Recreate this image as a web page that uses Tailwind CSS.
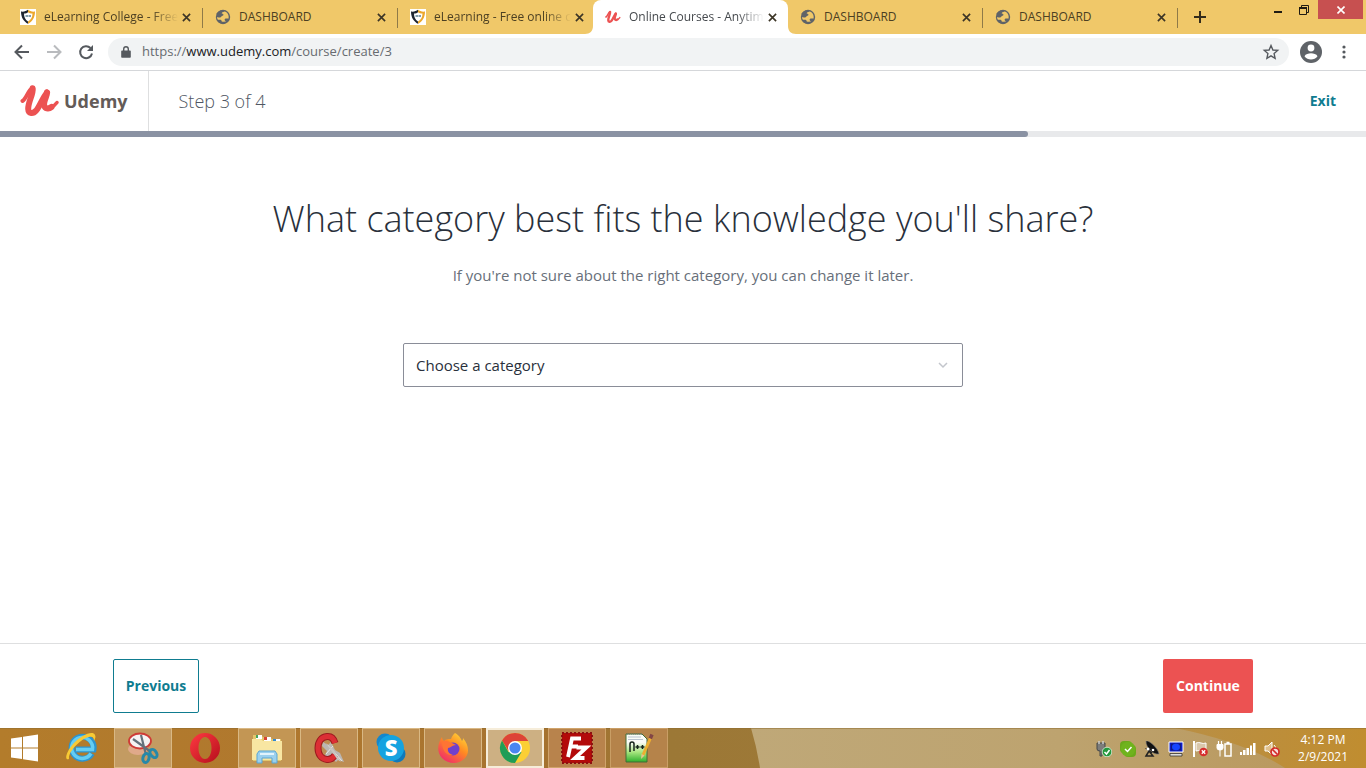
<!DOCTYPE html>
<html lang="en">

<head>
    <meta charset="UTF-8">
    <meta name="viewport" content="width=device-width, initial-scale=1.0">
    <script src="https://cdn.jsdelivr.net/npm/@tailwindcss/browser@4"></script>
    <title>Online Courses - Anytime, Anywhere | Udemy</title>
</head>

<body class="h-screen flex flex-col overflow-hidden bg-white font-['Open_Sans','Noto_Sans',sans-serif]">

    <!-- shared symbols -->
    <svg class="hidden">
        <symbol id="shield" viewBox="0 0 16 16">
            <rect width="16" height="16" fill="#fff" />
            <path d="M1 2.500C4 3 6 2 8 .8v14C4 12.500 1 9 1 2.500z" fill="#1d2430" />
            <path d="M8 .8C10 2 12 3 15 2.500 15 9 12 12.500 8 15z" fill="#eca72c" />
            <path d="M4 4.500C6 4.500 7 4 8 3.200c1 .8 2.500 1.300 4.500 1.300 0 4-1.500 6-4.500 8-3-2-4-4.500-4-8z" fill="#fff" />
            <path d="M5.500 7H8M8.500 7H11" stroke="#5c7f93" stroke-width="1.500" />
        </symbol>
        <symbol id="globe" viewBox="0 0 16 16">
            <circle cx="8" cy="8" r="7.200" fill="#5f6368" />
            <path d="M9.500 2.500C8 3 6.500 3.500 6.800 4.500c.3.800 1.400.3 1.700 1.100.2.900-.8 1-1.600 1.500-.6.500-.8 1.200-1.800 1.300-1 0-2-.4-3.200-.2.100.9.500 1.800 1 2.500 1 .2 2.400-.4 3.200.3.700.7.300 1.700 1 2.300 1 .3 2.500 0 3.500-.6 0-.8-1-1.200-1-2s.8-1.200 1.800-1.200h2.200c.4-2.200-.3-4.800-2.200-6.200-.6-.4-1.300-.8-1.900-.8z" fill="#f0c869" />
            <path d="M2 5.500C3 4 4 3 6 2.500M4 12.500C6 14 8 14 10 13.500" fill="none" stroke="#5f6368" stroke-width="2" />
        </symbol>
        <symbol id="close" viewBox="0 0 10 10">
            <path d="M1 1l8 8M9 1L1 9" stroke="#3c3526" stroke-width="1.800" />
        </symbol>
        <symbol id="udemy" viewBox="0 0 40 34">
            <g fill="none" stroke="#ec5252" stroke-linecap="round" stroke-linejoin="round">
                <path d="M2.500 17C6.500 14.500 8 6 12.500 4" stroke-width="4" />
                <path d="M12.700 4.300C13.500 10 8 18 8.200 25c.2 5 5 5 8 1.500 4-5 6-12 10.800-18" stroke-width="6" />
                <path d="M27 8.500C27.500 12 22.500 18 24.500 22.500c2 3 5 2 7 .5" stroke-width="6" />
                <path d="M31 23.500c3-1.500 4.500-3 6-5" stroke-width="3.500" />
            </g>
        </symbol>
    </svg>

    <!-- tab strip -->
    <div class="h-[34px] shrink-0 flex bg-[#f0c869] pl-2 text-xs text-[#4b3f22]">
        <div class="flex flex-1 min-w-0">
            <div class="relative w-full max-w-[195px] flex items-center gap-1 px-3">
                <svg class="w-4 h-4 shrink-0"><use href="#shield" /></svg>
                <span class="flex-1 ml-1 whitespace-nowrap [mask-image:linear-gradient(to_right,black_80%,transparent)]">eLearning College - Free</span>
                <button aria-label="Close tab"><svg class="block w-[9px] h-[9px]"><use href="#close" /></svg></button>
                <i class="absolute right-0 top-2 w-px h-5 bg-[#8f7a48]"></i>
            </div>
            <div class="relative w-full max-w-[195px] flex items-center gap-1 px-3">
                <svg class="w-4 h-4 shrink-0"><use href="#globe" /></svg>
                <span class="flex-1 ml-1 whitespace-nowrap">DASHBOARD</span>
                <button aria-label="Close tab"><svg class="block w-[9px] h-[9px]"><use href="#close" /></svg></button>
                <i class="absolute right-0 top-2 w-px h-5 bg-[#8f7a48]"></i>
            </div>
            <div class="relative w-full max-w-[195px] flex items-center gap-1 px-3">
                <svg class="w-4 h-4 shrink-0"><use href="#shield" /></svg>
                <span class="flex-1 ml-1 whitespace-nowrap [mask-image:linear-gradient(to_right,black_80%,transparent)]">eLearning - Free online c</span>
                <button aria-label="Close tab"><svg class="block w-[9px] h-[9px]"><use href="#close" /></svg></button>
            </div>
            <div class="relative w-full max-w-[195px] flex items-center gap-1 px-3 bg-white rounded-t-lg text-[#45494d]">
                <svg class="absolute -left-2 bottom-0 w-2 h-2" viewBox="0 0 8 8"><path d="M8 0v8H0c5 0 8-3 8-8z" fill="#fff" /></svg>
                <svg class="absolute -right-2 bottom-0 w-2 h-2" viewBox="0 0 8 8"><path d="M0 0v8h8C3 8 0 5 0 0z" fill="#fff" /></svg>
                <svg class="w-4 h-4 shrink-0"><use href="#udemy" /></svg>
                <span class="flex-1 ml-1 whitespace-nowrap [mask-image:linear-gradient(to_right,black_80%,transparent)]">Online Courses - Anytim</span>
                <button aria-label="Close tab"><svg class="block w-[9px] h-[9px]"><use href="#close" /></svg></button>
            </div>
            <div class="relative w-full max-w-[195px] flex items-center gap-1 px-3">
                <svg class="w-4 h-4 shrink-0"><use href="#globe" /></svg>
                <span class="flex-1 ml-1 whitespace-nowrap">DASHBOARD</span>
                <button aria-label="Close tab"><svg class="block w-[9px] h-[9px]"><use href="#close" /></svg></button>
                <i class="absolute right-0 top-2 w-px h-5 bg-[#8f7a48]"></i>
            </div>
            <div class="relative w-full max-w-[195px] flex items-center gap-1 px-3">
                <svg class="w-4 h-4 shrink-0"><use href="#globe" /></svg>
                <span class="flex-1 ml-1 whitespace-nowrap">DASHBOARD</span>
                <button aria-label="Close tab"><svg class="block w-[9px] h-[9px]"><use href="#close" /></svg></button>
                <i class="absolute right-0 top-2 w-px h-5 bg-[#8f7a48]"></i>
            </div>
            <button aria-label="New tab" class="px-4">
                <svg class="w-3 h-3" viewBox="0 0 12 12"><path d="M6 0v12M0 6h12" stroke="#332c1c" stroke-width="2" /></svg>
            </button>
        </div>
        <div class="flex items-start pr-[3px]">
            <button aria-label="Minimize" class="w-6 h-5 flex justify-center items-center"><svg class="w-2 h-5" viewBox="0 0 8 20"><path d="M0 12h8" stroke="#1f1b12" stroke-width="2" /></svg></button>
            <button aria-label="Restore" class="w-7 h-5 flex justify-center items-center">
                <svg class="w-[10px] h-[10px]" viewBox="0 0 10 10" fill="none" stroke="#1f1b12"><path d="M2.500 2V.5h7v7H8" /><path d="M.5 3h7v6.500h-7z" /><path d="M0 3h8" stroke-width="2" /></svg>
            </button>
            <button aria-label="Close" class="w-[45px] h-[19px] flex justify-center items-center bg-[#c75050]">
                <svg class="w-2 h-2" viewBox="0 0 8 8"><path d="M.5.5l7 7M7.500.5l-7 7" stroke="#fff" stroke-width="1.600" /></svg>
            </button>
        </div>
    </div>

    <!-- toolbar -->
    <div class="h-[37px] shrink-0 flex items-center border-b border-[#d5d7da] pl-3 pr-3">
        <button aria-label="Back" class="w-8 flex items-center"><svg class="w-5 h-5" viewBox="0 0 20 20" fill="none" stroke="#55595e" stroke-width="2"><path d="M17 10H4M10 3.500L3.500 10l6.500 6.500" /></svg></button>
        <button aria-label="Forward" class="w-8 flex items-center"><svg class="w-5 h-5" viewBox="0 0 20 20" fill="none" stroke="#b9bbbe" stroke-width="2"><path d="M3 10h13M10 3.500l6.500 6.500-6.500 6.500" /></svg></button>
        <button aria-label="Reload" class="w-8 flex items-center"><svg class="w-5 h-5" viewBox="0 0 20 20"><path d="M14.500 6A6 6 0 1 0 16 11.500" fill="none" stroke="#55595e" stroke-width="2" /><path d="M17 3v6h-6z" fill="#55595e" /></svg></button>
        <div class="flex-1 h-7 flex items-center rounded-full bg-[#f1f3f4] pl-3 pr-2">
            <svg class="w-3 h-3" viewBox="0 0 12 12"><path d="M2 4.500h8a.8.8 0 0 1 .8.800v5.700a.8.8 0 0 1-.8.800H2a.8.8 0 0 1-.8-.8V5.300A.8.8 0 0 1 2 4.500z" fill="#55595e" /><path d="M3.700 5V3a2.300 2.300 0 0 1 4.600 0v2" fill="none" stroke="#55595e" stroke-width="1.400" /></svg>
            <div class="flex-1 pl-[10px] text-[13px] text-[#676b70]">https://<span class="text-[#202124]">www.udemy.com</span>/course/create/3</div>
            <button aria-label="Bookmark this page"><svg class="block w-5 h-5" viewBox="0 0 20 20"><path d="M10 3.500l1.900 4.500 4.800.4-3.600 3.200 1 4.800L10 13.900l-4.100 2.500 1-4.800-3.600-3.200 4.800-.4z" fill="none" stroke="#55595e" stroke-width="1.400" /></svg></button>
        </div>
        <button aria-label="Profile" class="ml-[11px]">
            <svg class="block w-[22px] h-[22px]" viewBox="0 0 22 22"><circle cx="11" cy="11" r="11" fill="#5f6368" /><circle cx="11" cy="7" r="3.400" fill="#fff" /><path d="M4.500 15.200c1-2.200 4-3 6.500-3s5.500.8 6.500 3C16 17.500 13.500 18.500 11 18.500s-5-1-6.500-3.300z" fill="#fff" /></svg>
        </button>
        <button aria-label="Menu" class="ml-3"><svg class="block w-5 h-5" viewBox="0 0 20 20" fill="#55595e"><circle cx="10" cy="5" r="1.600" /><circle cx="10" cy="10" r="1.600" /><circle cx="10" cy="15" r="1.600" /></svg></button>
    </div>

    <!-- course header -->
    <header class="h-[60px] shrink-0 flex items-center">
        <a href="#" class="h-full flex items-center gap-1 px-5 border-r border-[#dedfe0]">
            <svg class="w-10 h-[34px]"><use href="#udemy" /></svg>
            <span class="text-lg font-bold text-[#635b58]">Udemy</span>
        </a>
        <span class="flex-1 pl-[30px] text-lg font-light text-[#505763]">Step 3 of 4</span>
        <a href="#" class="pr-[30px] text-sm font-bold text-[#0f7c90]">Exit</a>
    </header>
    <div class="h-[6px] shrink-0 bg-[#e8e9eb]">
        <div class="h-full rounded-r-[3px] bg-[#8a92a3]" style="width: 75.250%"></div>
    </div>

    <main class="flex-1 flex flex-col items-center px-4 pt-14">
        <h1 class="text-4xl leading-[52px] font-light text-center text-[#29303b]">What category best fits the knowledge you'll share?</h1>
        <p class="mt-[18px] text-[15px] leading-6 text-center text-[#686f7a]">If you're not sure about the right category, you can change it later.</p>
        <div class="relative w-full max-w-[560px] mt-14">
            <select aria-label="Category" class="appearance-none block w-full h-11 px-3 text-[15px] text-[#29303b] bg-white border border-[#8a8d98] rounded-xs">
                <option>Choose a category</option>
            </select>
            <svg class="absolute right-[15px] top-[18px] w-[10px] h-2 pointer-events-none" viewBox="0 0 10 8"><path d="M1 2l4 4 4-4" fill="none" stroke="#c3c6cc" stroke-width="1.500" /></svg>
        </div>
    </main>

    <footer class="shrink-0 border-t border-[#dedfe0] py-[15px]">
        <div class="max-w-[1140px] mx-auto flex justify-between text-sm font-bold">
            <button class="h-[54px] w-[86px] border border-[#0f7c90] rounded-xs text-[#0f7c90]">Previous</button>
            <button class="h-[54px] w-[90px] rounded-xs bg-[#ec5252] text-white">Continue</button>
        </div>
    </footer>

    <!-- taskbar -->
    <div class="relative h-10 shrink-0 flex justify-between bg-[#ad7a30]">
        <svg class="absolute inset-0 w-full h-full" viewBox="0 0 1366 40" preserveAspectRatio="none">
            <defs>
                <linearGradient id="bar"><stop offset="0" stop-color="#b37c2b" /><stop offset=".2" stop-color="#b0782e" /><stop offset=".4" stop-color="#a5722f" /><stop offset=".49" stop-color="#9c7836" /><stop offset="1" stop-color="#a27b3c" /></linearGradient>
                <linearGradient id="barlight"><stop offset="0" stop-color="#bfa878" /><stop offset=".5" stop-color="#bda36f" /><stop offset="1" stop-color="#b9965a" /></linearGradient>
                <linearGradient id="bargold"><stop offset="0" stop-color="#b98f45" /><stop offset="1" stop-color="#c08d30" /></linearGradient>
            </defs>
            <rect width="1366" height="40" fill="url(#bar)" />
            <path d="M751 0q6 20 9 40h606V0z" fill="url(#barlight)" />
            <path d="M1175 0q70 14 110 40h81V0z" fill="url(#bargold)" />
            <path d="M0 .5h1366" stroke="#8d6c30" stroke-opacity=".5" />
        </svg>
        <div class="relative flex gap-1">
            <button aria-label="Start" class="w-12 flex items-center justify-center">
                <svg class="w-7 h-7" viewBox="0 0 28 28" fill="#fff"><path d="M1 4.500l11-1.600V13.500H1zM13 2.700L28 .6v12.900H13zM1 14.500h11v10.600L1 23.500zM13 14.500h15v12.900l-15-2.100z" /></svg>
            </button>
            <button aria-label="Internet Explorer" class="w-[58px] flex items-center justify-center">
                <svg class="w-8 h-8" viewBox="0 0 32 32">
                    <path d="M27 21.500a11 11 0 1 1 1.500-4H10.500" fill="none" stroke="#2d94cf" stroke-width="6" />
                    <path d="M26 21.500a10.500 10.500 0 1 1 1.500-4H11" fill="none" stroke="#64cdf3" stroke-width="3.500" />
                    <path d="M4 27C-1 29 1 20 8 12 16 3 28-2 30 3c1 2 0 4-1 6 0-3-1-5-5-4C17 6 3 19 4 27z" fill="#f8ca35" />
                </svg>
            </button>
            <button aria-label="Snipping Tool" class="w-[58px] flex items-center justify-center border border-[#d9b884] bg-[#c39b62]">
                <svg class="w-8 h-8" viewBox="0 0 32 32">
                    <ellipse cx="11" cy="17" rx="10" ry="6" fill="#e0a98a" />
                    <ellipse cx="13" cy="9" rx="11" ry="7.500" fill="#f6f3f3" stroke="#cf3a36" stroke-width="1.800" />
                    <path d="M6 7l18 13M14 3l5 20" stroke="#65717b" stroke-width="2.200" />
                    <ellipse cx="19" cy="26" rx="3" ry="4.500" transform="rotate(15 19 26)" fill="none" stroke="#2788a8" stroke-width="3" />
                    <ellipse cx="26.500" cy="21.500" rx="3" ry="4.500" transform="rotate(-35 26.500 21.500)" fill="none" stroke="#2788a8" stroke-width="3" />
                </svg>
            </button>
            <button aria-label="Opera" class="w-[58px] flex items-center justify-center">
                <svg class="w-8 h-8" viewBox="0 0 32 32">
                    <defs><linearGradient id="opera" x2="1" y2="1"><stop offset="0" stop-color="#ff3a42" /><stop offset="1" stop-color="#b50f1b" /></linearGradient></defs>
                    <path fill-rule="evenodd" d="M16 1a15 15 0 1 0 0 30 15 15 0 0 0 0-30zm0 4c4 0 6.500 5 6.500 11S20 27 16 27 9.500 22 9.500 16 12 5 16 5z" fill="url(#opera)" />
                </svg>
            </button>
            <button aria-label="File Explorer" class="w-[58px] flex items-center justify-center border border-[#d9b884] bg-[#c39654]">
                <svg class="w-8 h-8" viewBox="0 0 32 32">
                    <path d="M2 3h8l2 2h7l2 2h9v22H2z" fill="#e2c66d" />
                    <path d="M5 3h6v4H5zM13 5h7v4h-7zM22 7h7v3h-7z" fill="#fff" />
                    <path d="M5 3h2v3H5z" fill="#45a45b" /><path d="M13 5h3v3h-3z" fill="#d84336" /><path d="M22 7h3v2h-3z" fill="#3289cf" />
                    <path d="M1 7h9l2 2h19v19H1z" fill="#f8e6a2" />
                    <path d="M6 31v-9l2-3h16l2 3v9h-5v-5H11v5z" fill="#9bd0ee" stroke="#5ba5d2" /><path d="M9 22h14" stroke="#e1f3fd" stroke-width="2" />
                </svg>
            </button>
            <button aria-label="CCleaner" class="w-[58px] flex items-center justify-center border border-[#d9b884] bg-[#bd8d52]">
                <svg class="w-8 h-8" viewBox="0 0 32 32">
                    <path d="M10 10l5 3 3-3 4 8 5 3 4 9-6-2-2 2-6-6-6 1 3-6-5-5z" fill="#bbb7b4" /><path d="M15 13l14 16M20 14l-7 8" stroke="#ece8e3" />
                    <path d="M22 11Q20 4 14 4.500C8 5 5 10 5 16s3 11 9 11.500Q19 28 22 23" fill="none" stroke="#9d1b1f" stroke-width="7" /><path d="M22 11Q20 4 14 4.500C8 5 5 10 5 16s3 11 9 11.500Q19 28 22 23" fill="none" stroke="#dc2f35" stroke-width="5" />
                    <path d="M13 11l7 6 8 13-4-3z" fill="#c9c5c1" />
                </svg>
            </button>
            <button aria-label="Skype" class="w-[58px] flex items-center justify-center border border-[#d9b884] bg-[#bd8f52]">
                <svg class="w-8 h-8" viewBox="0 0 32 32"><circle cx="10" cy="10" r="8.500" fill="#1587cb" /><circle cx="22" cy="22" r="8.500" fill="#1079bb" /><circle cx="16" cy="16" r="13" fill="#15a3e0" /><text x="16" y="24" text-anchor="middle" font-size="22" font-weight="800" fill="#fff">S</text></svg>
            </button>
            <button aria-label="Firefox" class="w-[58px] flex items-center justify-center border border-[#d9b884] bg-[#ba8b50]">
                <svg class="w-8 h-8" viewBox="0 0 32 32">
                    <defs><linearGradient id="fire" x1=".9" y1="0" x2=".2" y2="1"><stop offset="0" stop-color="#ffe03b" /><stop offset=".45" stop-color="#ff8a22" /><stop offset="1" stop-color="#f0266f" /></linearGradient></defs>
                    <path d="M18 1c5 3 6 6 7 8 1-1 1-2 1-3 6 7 7 16 1 21-6 6-16 5-22-1C-1 19 1 11 5 5c0 2 1 3 2 4 2-2 4-2 7-2 1-3 2-4 4-6z" fill="url(#fire)" />
                    <circle cx="16" cy="17" r="6.500" fill="#7140cd" /><path d="M5 10c4-3 7 0 10 1l4 2c-4 0-5 3-8 3-1 4 2 6 5 7-6 1-11-4-11-13z" fill="#ff7433" />
                </svg>
            </button>
            <button aria-label="Chrome" class="w-[58px] flex items-center justify-center border-2 border-[#f6edda] bg-[#cdb083]">
                <svg class="w-8 h-8" viewBox="0 0 32 32"><circle cx="16" cy="16" r="15" fill="#fbcf34" /><path d="M3 8.500A15 15 0 0 1 29 8.500L29 9H16l-6.500 10z" fill="#dd4437" /><path d="M3 8.500A15 15 0 0 0 16 31l6.500-11-13 0z" fill="#1f9d57" /><circle cx="16" cy="16" r="7" fill="#fff" /><circle cx="16" cy="16" r="5.600" fill="#4a86f0" /></svg>
            </button>
            <button aria-label="FileZilla" class="w-[58px] flex items-center justify-center border border-[#d0a46b] bg-[#b8834c]">
                <svg class="w-8 h-8" viewBox="0 0 32 32"><rect x="1" y="1" width="30" height="30" fill="#b30a0a" stroke="#8d1010" stroke-width="2" stroke-dasharray="2 2" /><path d="M20 6.500h-9L7 25M9.500 14.500H17M15.500 15.500h10L14 26h9.500" fill="none" stroke="#fff" stroke-width="3.800" /></svg>
            </button>
            <button aria-label="Notepad++" class="w-[58px] flex items-center justify-center border border-[#c99e65] bg-[#b5834a]">
                <svg class="w-8 h-8" viewBox="0 0 32 32">
                    <defs><linearGradient id="note" x2="0" y2="1"><stop offset=".3" stop-color="#fafcf6" /><stop offset=".65" stop-color="#a6e57e" /><stop offset="1" stop-color="#2eaf2d" /></linearGradient></defs>
                    <path d="M3 2h16l5 5v23H3z" fill="url(#note)" stroke="#426d36" /><path d="M5 5h13M5 7.500h15" stroke="#b9c3ce" /><path d="M4 2h15" stroke="#777" stroke-dasharray="1 1" />
                    <path d="M7 20v-8q0-2 2-2t2 2v7M12.500 15h4M14.500 13v4M17.500 15h4M19.500 13v4" fill="none" stroke="#17261b" stroke-width="1.500" />
                    <path d="M20 23L28 5" stroke="#edae30" stroke-width="3" /><path d="M27.300 6.500L29 2.500" stroke="#824545" stroke-width="3.500" /><path d="M18.500 22l3 1.500L18 27z" fill="#e8c48c" />
                </svg>
            </button>
        </div>

        <div class="relative flex items-center pr-[18px] text-white">
            <div class="flex gap-2 pt-[2px]">
                <svg class="w-4 h-4" viewBox="0 0 16 16"><path d="M1 2h8v6q0 2-3 2v5H4v-5Q1 10 1 8z" fill="#7d7d7b" stroke="#474849" /><path d="M3 0v3M7 0v3" stroke="#cdcdcd" stroke-width="1.500" /><circle cx="11" cy="11" r="4.800" fill="#23993d" stroke="#e6f0e2" stroke-width=".8" /><path d="M8.500 11l2 2 3-4" fill="none" stroke="#fff" stroke-width="1.500" /></svg>
                <svg class="w-4 h-4" viewBox="0 0 16 16"><rect x="0" y="0" width="12" height="12" rx="4" fill="#6ba91b" /><rect x="4" y="4" width="12" height="12" rx="4" fill="#6ba91b" /><circle cx="8" cy="8" r="7.300" fill="#6fb31d" /><path d="M5 8l2.500 2.500L11.500 6" fill="none" stroke="#fff" stroke-width="1.500" /></svg>
                <svg class="w-4 h-4" viewBox="0 0 16 16"><path d="M2 0c3-1 12 7 13 13-6 1-13-6-13-13z" fill="#111" stroke="#777" stroke-width=".6" /><path d="M8 8L3 8l5 4M2 15l3-5 4 5z" fill="none" stroke="#222" stroke-width="1.500" /><circle cx="4" cy="8" r="1.500" fill="#fff" /><circle cx="9" cy="9" r="1.300" fill="#fff" /></svg>
                <svg class="w-4 h-4" viewBox="0 0 16 16"><path d="M1 1h14v10H1z" fill="#0c1cc9" stroke="#fff" /><path d="M3 2.500h10v7H3z" fill="#111a83" /><ellipse cx="8" cy="6" rx="4" ry="3.200" fill="#1645ff" /><path d="M2 12.500h12V15H2z" fill="#ddd" stroke="#222" stroke-width=".7" /></svg>
                <svg class="w-4 h-4" viewBox="0 0 16 16"><path d="M2 0v16" stroke="#fff" stroke-width="2" /><path d="M4 2q3-1 5 0t5 0v8q-3 1-5 0t-5 0z" fill="#d9c7aa" stroke="#fff" /><circle cx="11.500" cy="11" r="4.300" fill="#d62d2d" /><path d="M9.800 9.300l3.400 3.400M13.200 9.300l-3.400 3.400" stroke="#fff" stroke-width="1.300" /></svg>
                <svg class="w-4 h-4" viewBox="0 0 16 16" fill="none" stroke="#fff"><path d="M2.500 0v4M5.500 0v4" stroke-width="1.200" /><path d="M1 3.500h6V7q0 2-3 2t-3-2z" fill="#fff" /><path d="M4 9v6.500" /><path d="M9 3h6v12H9zM10.500 1.500h3" stroke-width="1.500" /></svg>
                <svg class="w-4 h-4" viewBox="0 0 16 16" fill="#fff"><path d="M0 11h2v3H0zM3 9h2.500v5H3zM6.500 7H9v7H6.500zM10 4.500h2V14h-2zM13 2h2.500v12H13z" /></svg>
                <svg class="w-4 h-4" viewBox="0 0 16 16"><path d="M1 5h3l4-4v13l-4-4H1z" fill="#e0c08c" stroke="#fff" /><path d="M10 4q2 2 2 4" fill="none" stroke="#fff" /><circle cx="11" cy="11" r="4" fill="#f7dfdd" stroke="#d42b28" stroke-width="1.700" /><path d="M8.500 8.500l5 5" stroke="#d42b28" stroke-width="1.700" /></svg>
            </div>
            <div class="ml-[18px] text-center text-xs leading-[17px]">4:12 PM<br>2/9/2021</div>
        </div>
    </div>
</body>

</html>
